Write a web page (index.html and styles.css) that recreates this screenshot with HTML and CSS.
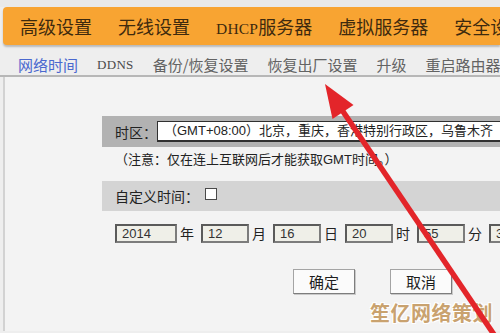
FILE: index.html
```html
<!DOCTYPE html>
<html lang="zh-CN">
<head>
    <meta charset="UTF-8">
    <meta name="viewport" content="width=device-width, initial-scale=1.0">
    <title>网络时间</title>
    <link rel="stylesheet" href="styles.css">
</head>
<body>

<div class="top-strip"></div>
<div class="menu">
    <span>高级设置</span>
    <span>无线设置</span>
    <span><span class="latin">DHCP</span>服务器</span>
    <span>虚拟服务器</span>
    <span>安全设置</span>
</div>
<div class="tabs">
    <a class="active">网络时间</a>
    <a class="latin">DDNS</a>
    <a>备份/恢复设置</a>
    <a>恢复出厂设置</a>
    <a>升级</a>
    <a>重启路由器</a>
</div>

<div class="panel">
    <div class="band zone">
        <label>时区：</label>
        <div class="select">（GMT+08:00）北京，重庆，香港特别行政区，乌鲁木齐</div>
    </div>
    <p class="note">（注意：仅在连上互联网后才能获取GMT时间。）</p>
    <div class="band custom">
        <label>自定义时间：</label>
        <input type="checkbox" class="check">
    </div>
    <div class="time-row">
        <input class="field year" type="text" value="2014"><span class="unit">年</span>
        <input class="field" type="text" value="12"><span class="unit">月</span>
        <input class="field" type="text" value="16"><span class="unit">日</span>
        <input class="field" type="text" value="20"><span class="unit">时</span>
        <input class="field" type="text" value="55"><span class="unit">分</span>
        <input class="field" type="text" value="30"><span class="unit">秒</span>
    </div>
    <div class="actions">
        <button class="btn">确定</button>
        <button class="btn">取消</button>
    </div>
</div>

<div class="watermark">笙亿网络策划</div>

<svg class="arrow" width="500" height="333" viewBox="0 0 500 333">
    <line x1="342" y1="110" x2="497" y2="339" stroke="#e3252a" stroke-width="5.5"/>
    <polygon points="325,84 353.5,105 332.5,119" fill="#e3252a"/>
</svg>

</body>
</html>
```

FILE: styles.css
```css
body {
    margin: 0;
    padding: 0;
    width: 500px;
    height: 333px;
    overflow: hidden;
    position: relative;
    background-color: #eeeeee;
    font-family: "Liberation Sans", "Noto Sans CJK SC", sans-serif;
    color: #222;
}
.top-strip {
    height: 7px;
    background: #e9e9e9;
}
.menu {
    margin-left: 3px;
    height: 38px;
    display: flex;
    align-items: center;
    gap: 26px;
    padding-left: 17px;
    background-color: #f8a432;
    border-radius: 4px 0 0 4px;
    box-shadow: 0 2px 2px rgba(0, 0, 0, 0.22);
    white-space: nowrap;
    overflow: hidden;
    font-family: "Noto Sans CJK SC", sans-serif;
    font-size: 18px;
    color: #3e2a0e;
}
.menu .latin {
    font-family: "Liberation Serif", serif;
    font-size: 15.5px;
    letter-spacing: 0.2px;
}
.tabs {
    height: 32px;
    box-sizing: border-box;
    padding: 10px 0 0 18px;
    display: flex;
    align-items: center;
    gap: 19px;
    white-space: nowrap;
    overflow: hidden;
    border-bottom: 2px solid #b7b7b7;
    font-family: "Noto Sans CJK SC", sans-serif;
    font-size: 15px;
    color: #636363;
}
.tabs a {
    line-height: 20px;
}
.tabs .active {
    color: #4a68cf;
}
.tabs .latin {
    font-family: "Liberation Serif", serif;
    font-size: 13px;
    letter-spacing: 0.3px;
    color: #4a4a4a;
}
.panel {
    margin-left: 3px;
    height: 254px;
    box-sizing: border-box;
    padding: 39px 0 0 97px;
    border-left: 2px solid #d2d2d2;
    background-color: #f3f3f3;
    overflow: hidden;
}
.band {
    display: flex;
    align-items: center;
    padding-left: 13px;
    white-space: nowrap;
    font-size: 14px;
}
.band.zone {
    height: 31px;
    background-color: #b2b2b2;
}
.band.zone label {
    width: 47px;
}
.select {
    flex-shrink: 0;
    width: 360px;
    height: 18px;
    line-height: 18px;
    box-sizing: content-box;
    padding-left: 6px;
    background: #ffffff;
    border: 1px solid #303030;
    border-bottom-width: 2px;
    font-size: 13px;
    color: #222;
}
.note {
    margin: 0;
    height: 34px;
    box-sizing: border-box;
    padding: 4px 0 0 13px;
    line-height: 18px;
    font-size: 13px;
    color: #222;
}
.band.custom {
    height: 30px;
    background-color: #d4d4d4;
}
.check {
    appearance: none;
    margin: 0 0 4px 6px;
    width: 12px;
    height: 12px;
    background: #fff;
    border: 1px solid #4a4a4a;
}
.time-row {
    display: flex;
    align-items: center;
    padding: 13px 0 0 13px;
    white-space: nowrap;
}
.field {
    flex-shrink: 0;
    width: 48px;
    height: 19px;
    box-sizing: border-box;
    margin: 0;
    padding: 0 0 0 5px;
    border: 2px solid #5a5a5a;
    border-right-color: #7c7c7c;
    border-bottom-color: #7c7c7c;
    background-color: #efefe8;
    font-family: "Liberation Sans", sans-serif;
    font-size: 13px;
    color: #333;
}
.field.year {
    width: 62px;
}
.unit {
    flex-shrink: 0;
    width: 14px;
    margin: 0 7px 0 3px;
    font-family: "Noto Sans CJK SC", sans-serif;
    font-size: 14px;
    line-height: 19px;
}
.actions {
    display: flex;
    gap: 35px;
    padding: 26px 0 0 191px;
}
.btn {
    width: 62px;
    height: 25px;
    padding: 0;
    background: #fbfbfb;
    border: 1px solid #a4a4a4;
    border-right-color: #7d7d7d;
    border-bottom-color: #7d7d7d;
    box-shadow: 1px 1px 0 #c9c9c9;
    font-family: "Noto Sans CJK SC", sans-serif;
    font-size: 15px;
    color: #1e1e1e;
}
.watermark {
    position: absolute;
    right: 7px;
    bottom: 6px;
    font-family: "Noto Sans CJK SC", sans-serif;
    font-size: 20px;
    font-weight: bold;
    letter-spacing: 0.5px;
    color: #c9a26f;
    text-shadow: 1px 1px 0 #fff, -1px -1px 0 #fff, 1px -1px 0 #fff, -1px 1px 0 #fff;
}
.arrow {
    position: absolute;
    left: 0;
    top: 0;
    pointer-events: none;
}
```
